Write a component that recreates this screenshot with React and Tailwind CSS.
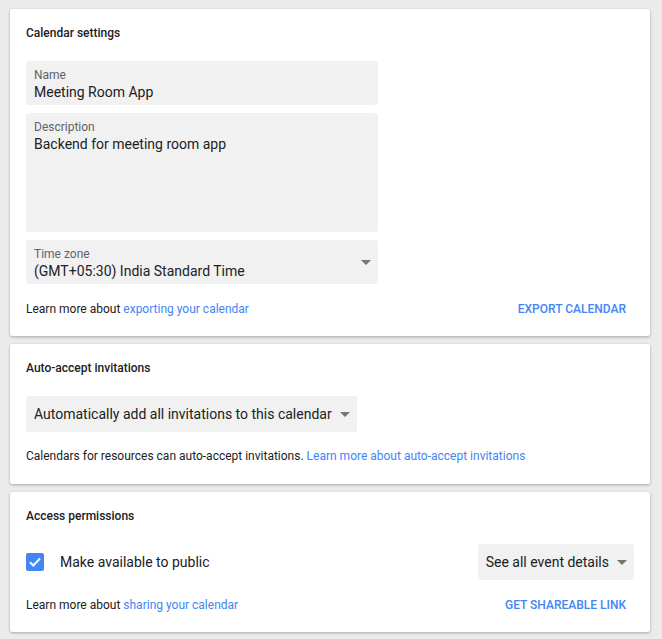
import React from 'react';

const font = { fontFamily: 'Roboto, "Noto Sans", Arial, sans-serif' };

function Arrow() {
  return (
    <svg width="10" height="5" viewBox="0 0 10 5" className="shrink-0">
      <path d="M0 0h10L5 5z" fill="#757575" />
    </svg>
  );
}

function Field({ label, value, tall, select }) {
  return (
    <div
      className={`flex w-[352px] items-start rounded-[3px] bg-[#f1f1f1] pl-2 pr-[7px] pt-[7px] ${tall ? 'h-[119px]' : 'h-[44px]'}`}
    >
      <div className="flex-1">
        <div className="text-[12px] leading-[14px] text-[#5f6368]">{label}</div>
        <div className="text-[14px] leading-[20px] text-[#202124]">{value}</div>
      </div>
      {select && (
        <div className="self-center pb-[7px]">
          <Arrow />
        </div>
      )}
    </div>
  );
}

function Card({ title, children }) {
  return (
    <div className="rounded-[2px] bg-white px-4 pt-4 shadow-[0_1px_3px_rgba(0,0,0,0.3)]">
      <h2 className="text-[12px] font-medium leading-4 text-[#202124]">{title}</h2>
      {children}
    </div>
  );
}

function Select({ text }) {
  return (
    <div className="inline-flex h-9 items-center gap-2 rounded-[3px] bg-[#f1f1f1] pl-2 pr-[7px]">
      <span className="text-[14px] text-[#202124]">{text}</span>
      <Arrow />
    </div>
  );
}

export default function App() {
  return (
    <div className="min-h-[639px] bg-[#ebebeb] pl-[10px] pr-[12px] pt-[9px] pb-2" style={font}>
      <div className="flex flex-col gap-2">
        <Card title="Calendar settings">
          <div className="mt-5 flex flex-col gap-2">
            <Field label="Name" value="Meeting Room App" />
            <Field label="Description" value="Backend for meeting room app" tall />
            <Field label="Time zone" value="(GMT+05:30) India Standard Time" select />
          </div>
          <div className="mt-[17px] flex items-center justify-between pb-[19px] text-[12px] leading-4">
            <span className="text-[#202124]">
              Learn more about <a className="text-[#4285f4]">exporting your calendar</a>
            </span>
            <button className="pr-2 text-[12px] font-medium uppercase text-[#4285f4]">Export calendar</button>
          </div>
        </Card>

        <Card title="Auto-accept invitations">
          <div className="mt-5">
            <Select text="Automatically add all invitations to this calendar" />
          </div>
          <div className="mt-4 pb-5 text-[12px] leading-4 text-[#202124]">
            Calendars for resources can auto-accept invitations.{' '}
            <a className="text-[#4285f4]">Learn more about auto-accept invitations</a>
          </div>
        </Card>

        <Card title="Access permissions">
          <div className="mt-5 flex items-center justify-between">
            <div className="flex items-center gap-4">
              <div className="flex h-[18px] w-[18px] items-center justify-center rounded-[2px] bg-[#4285f4]">
                <svg width="12" height="10" viewBox="0 0 12 10">
                  <path d="M1 5.2l3.3 3.3L11 1.5" fill="none" stroke="#fff" strokeWidth="2" />
                </svg>
              </div>
              <span className="text-[14px] text-[#202124]">Make available to public</span>
            </div>
            <Select text="See all event details" />
          </div>
          <div className="mt-[17px] flex items-center justify-between pb-[19px] text-[12px] leading-4">
            <span className="text-[#202124]">
              Learn more about <a className="text-[#4285f4]">sharing your calendar</a>
            </span>
            <button className="pr-2 text-[12px] font-medium uppercase text-[#4285f4]">Get shareable link</button>
          </div>
        </Card>
      </div>
    </div>
  );
}
